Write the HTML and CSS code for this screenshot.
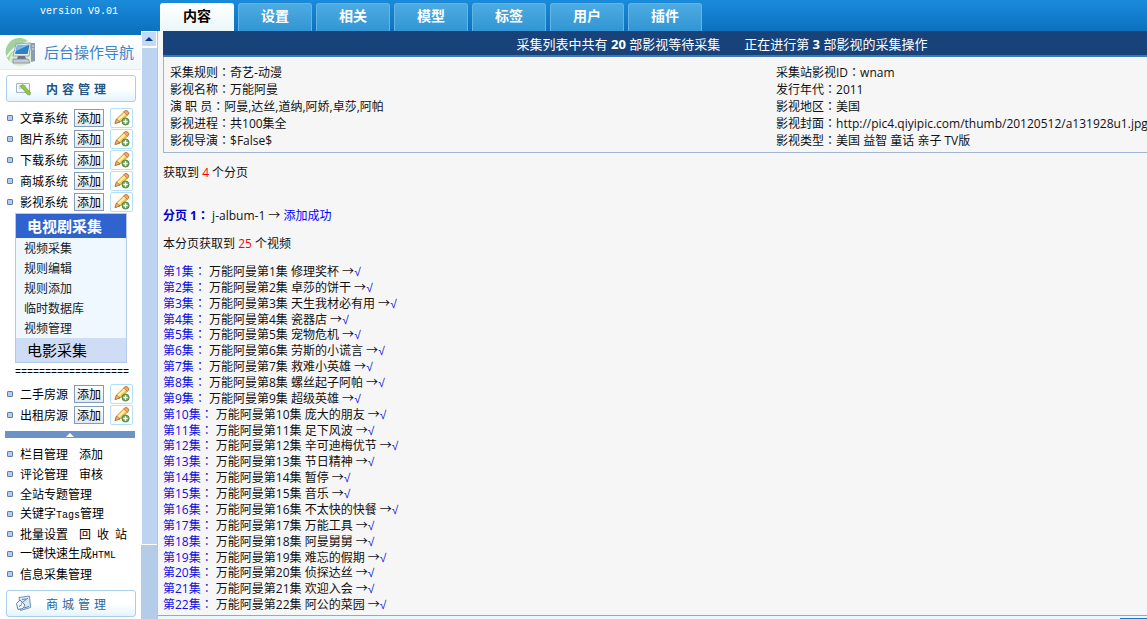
FILE: index.html
```html
<!DOCTYPE html>
<html lang="zh-CN">
<head>
<meta charset="utf-8">
<title>后台操作导航</title>
<link rel="stylesheet" href="styles.css">
</head>
<body>
<svg class="defs" aria-hidden="true">
  <symbol id="pencil" viewBox="0 0 18 18">
    <path d="M2 14.500 3.500 10 11.500 2.200Q13 .8 14.800 2.300T15.200 5.500L7 13Z" fill="#f8c948" stroke="#c88a2e" stroke-width=".8"/>
    <path d="M5 11 13 3.500" stroke="#ffefae" stroke-width="2"/>
    <path d="M11.500 2.200Q13 .8 14.800 2.300T15.200 5.500L14.300 6.300 10.700 3Z" fill="#f0a673" stroke="#b5602a" stroke-width=".6"/>
    <path d="M2 14.500 3.500 10 7 13Z" fill="#e9b58a" stroke="#8a5b20" stroke-width=".6"/>
    <circle cx="12.500" cy="12.500" r="3.600" fill="#6aa552" stroke="#4a7f45" stroke-width=".8"/>
    <path d="M12.500 10.300v4.400M10.300 12.500h4.400" stroke="#fff" stroke-width="1.400"/>
  </symbol>
</svg>
<header class="top">
  <div class="version">version V9.01</div>
  <nav class="tabs">
    <button class="tab active">内容</button><button class="tab">设置</button><button class="tab">相关</button><button class="tab">模型</button><button class="tab">标签</button><button class="tab">用户</button><button class="tab">插件</button>
  </nav>
</header>
<div class="body">
  <aside class="side">
    <div class="brand">
      <svg width="34" height="34" viewBox="0 0 34 34" aria-hidden="true">
        <circle cx="15" cy="17" r="14" fill="#d9edd2"/>
        <path d="M15 3A14 14 0 0 0 4 26Q6 13 24 8Q20 3.500 15 3Z" fill="#9fd39b"/>
        <path d="M2 22Q8 11 24 7" stroke="#f3fbef" stroke-width="2" fill="none"/>
        <path d="M26 8h4v18l-4 1z" fill="#8e9dab"/>
        <path d="M27 11h2M27 14h2" stroke="#dfe7ee"/>
        <path d="M11 9 26 8 24 21 8 21Z" fill="#e6edf3" stroke="#8495a5" stroke-width=".8"/>
        <path d="M12 10.500 24.500 9.700 22.700 19 10 19Z" fill="#2f7fc4"/>
        <path d="M12 10.500 24.500 9.700 11 16Z" fill="#7cbcea"/>
        <path d="M13 21h7l1 3h-9z" fill="#66757f"/>
        <path d="M8 24h15l2 4H8z" fill="#c3ccd4" stroke="#7d8893" stroke-width=".8"/>
      </svg>
      <span>后台操作导航</span>
    </div>
    <button class="group strong">
      <svg width="17" height="16" viewBox="0 0 17 16" aria-hidden="true">
        <path d="M1.500 2.500h13v9h-13z" fill="#f4f8fb" stroke="#a3b5c6"/>
        <path d="M4 5h7M4 7h4" stroke="#9fb0c0"/>
        <path d="m5.500 5 2.500-1.500 7.500 8-.5 2.500-2.500-.5Z" fill="#8fc747" stroke="#6b9d35" stroke-width=".7"/>
      </svg>
      <span>内容管理</span>
    </button>
    <ul class="systems">
      <li><a href="#">文章系统</a><button class="add">添加</button><button class="edit" aria-label="编辑"><svg><use href="#pencil"/></svg></button></li>
      <li><a href="#">图片系统</a><button class="add">添加</button><button class="edit" aria-label="编辑"><svg><use href="#pencil"/></svg></button></li>
      <li><a href="#">下载系统</a><button class="add">添加</button><button class="edit" aria-label="编辑"><svg><use href="#pencil"/></svg></button></li>
      <li><a href="#">商城系统</a><button class="add">添加</button><button class="edit" aria-label="编辑"><svg><use href="#pencil"/></svg></button></li>
      <li><a href="#">影视系统</a><button class="add">添加</button><button class="edit" aria-label="编辑"><svg><use href="#pencil"/></svg></button></li>
    </ul>
    <div class="panel">
      <button class="panel-title open">电视剧采集</button>
      <div class="panel-links">
        <a href="#">视频采集</a><a href="#">规则编辑</a><a href="#">规则添加</a><a href="#">临时数据库</a><a href="#">视频管理</a>
      </div>
      <button class="panel-title">电影采集</button>
    </div>
    <div class="rule">===================</div>
    <ul class="systems">
      <li><a href="#">二手房源</a><button class="add">添加</button><button class="edit" aria-label="编辑"><svg><use href="#pencil"/></svg></button></li>
      <li><a href="#">出租房源</a><button class="add">添加</button><button class="edit" aria-label="编辑"><svg><use href="#pencil"/></svg></button></li>
    </ul>
    <button class="fold" aria-label="收起"><svg width="8" height="4" viewBox="0 0 8 4"><path d="M0 4 4 0l4 4z" fill="#fff"/></svg></button>
    <ul class="links">
      <li><a href="#">栏目管理</a><a href="#">添加</a></li>
      <li><a href="#">评论管理</a><a href="#">审核</a></li>
      <li><a href="#">全站专题管理</a></li>
      <li><a href="#">关键字<span class="mono">Tags</span>管理</a></li>
      <li><a href="#">批量设置</a><a href="#" class="spread"><span>回</span><span>收</span><span>站</span></a></li>
      <li><a href="#">一键快速生成<span class="mono">HTML</span></a></li>
      <li><a href="#">信息采集管理</a></li>
    </ul>
    <button class="group">
      <svg width="17" height="17" viewBox="0 0 17 17" aria-hidden="true">
        <path d="M4 2.500 14.500 1l1 11.500-10 3Z" fill="#dce9f5" stroke="#6f93b8"/>
        <path d="M1.500 8.500 5 5l5 5-2 3.500-5 1Z" fill="#eef5fb" stroke="#5c84ad"/>
        <path d="M6 8.500 13 3M4 11.500l3-2M9 13l5-1.500M7 4.500l4-.5" stroke="#5c84ad" fill="none"/>
      </svg>
      <span>商城管理</span>
    </button>
  </aside>
  <div class="scroll" aria-hidden="true">
    <div class="scroll-up"><svg width="8" height="4" viewBox="0 0 8 4"><path d="M0 4 4 0l4 4z" fill="#0b3a8c"/></svg></div>
    <div class="thumb"></div>
    <div class="track"></div>
  </div>
  <main class="main">
    <div class="status"><span>采集列表中共有 <b>20</b> 部影视等待采集</span><span>正在进行第 <b>3</b> 部影视的采集操作</span></div>
    <div class="info">
      <div>
        <p>采集规则<i lang="zh-TW">：</i>奇艺-动漫</p>
        <p>影视名称<i lang="zh-TW">：</i>万能阿曼</p>
        <p>演 职 员<i lang="zh-TW">：</i>阿曼,达丝,道纳,阿娇,卓莎,阿帕</p>
        <p>影视进程<i lang="zh-TW">：</i>共100集全</p>
        <p>影视导演<i lang="zh-TW">：</i>$False$</p>
      </div>
      <div>
        <p>采集站影视ID<i lang="zh-TW">：</i>wnam</p>
        <p>发行年代<i lang="zh-TW">：</i>2011</p>
        <p>影视地区<i lang="zh-TW">：</i>美国</p>
        <p>影视封面<i lang="zh-TW">：</i>http://pic4.qiyipic.com/thumb/20120512/a131928u1.jpg</p>
        <p>影视类型<i lang="zh-TW">：</i>美国 益智 童话 亲子 TV版</p>
      </div>
    </div>
    <p class="pages">获取到 <em>4</em> 个分页</p>
    <p class="page"><b>分页 1<i lang="zh-TW">：</i></b> j-album-1 <u>→</u> <a href="#">添加成功</a></p>
    <p class="videos">本分页获取到 <em>25</em> 个视频</p>
    <ol class="episodes">
      <li><b>第1集<i lang="zh-TW">：</i></b> 万能阿曼第1集 修理奖杯 <u>→</u><s>√</s></li>
      <li><b>第2集<i lang="zh-TW">：</i></b> 万能阿曼第2集 卓莎的饼干 <u>→</u><s>√</s></li>
      <li><b>第3集<i lang="zh-TW">：</i></b> 万能阿曼第3集 天生我材必有用 <u>→</u><s>√</s></li>
      <li><b>第4集<i lang="zh-TW">：</i></b> 万能阿曼第4集 瓷器店 <u>→</u><s>√</s></li>
      <li><b>第5集<i lang="zh-TW">：</i></b> 万能阿曼第5集 宠物危机 <u>→</u><s>√</s></li>
      <li><b>第6集<i lang="zh-TW">：</i></b> 万能阿曼第6集 劳斯的小谎言 <u>→</u><s>√</s></li>
      <li><b>第7集<i lang="zh-TW">：</i></b> 万能阿曼第7集 救难小英雄 <u>→</u><s>√</s></li>
      <li><b>第8集<i lang="zh-TW">：</i></b> 万能阿曼第8集 螺丝起子阿帕 <u>→</u><s>√</s></li>
      <li><b>第9集<i lang="zh-TW">：</i></b> 万能阿曼第9集 超级英雄 <u>→</u><s>√</s></li>
      <li><b>第10集<i lang="zh-TW">：</i></b> 万能阿曼第10集 庞大的朋友 <u>→</u><s>√</s></li>
      <li><b>第11集<i lang="zh-TW">：</i></b> 万能阿曼第11集 足下风波 <u>→</u><s>√</s></li>
      <li><b>第12集<i lang="zh-TW">：</i></b> 万能阿曼第12集 辛可迪梅优节 <u>→</u><s>√</s></li>
      <li><b>第13集<i lang="zh-TW">：</i></b> 万能阿曼第13集 节日精神 <u>→</u><s>√</s></li>
      <li><b>第14集<i lang="zh-TW">：</i></b> 万能阿曼第14集 暂停 <u>→</u><s>√</s></li>
      <li><b>第15集<i lang="zh-TW">：</i></b> 万能阿曼第15集 音乐 <u>→</u><s>√</s></li>
      <li><b>第16集<i lang="zh-TW">：</i></b> 万能阿曼第16集 不太快的快餐 <u>→</u><s>√</s></li>
      <li><b>第17集<i lang="zh-TW">：</i></b> 万能阿曼第17集 万能工具 <u>→</u><s>√</s></li>
      <li><b>第18集<i lang="zh-TW">：</i></b> 万能阿曼第18集 阿曼舅舅 <u>→</u><s>√</s></li>
      <li><b>第19集<i lang="zh-TW">：</i></b> 万能阿曼第19集 难忘的假期 <u>→</u><s>√</s></li>
      <li><b>第20集<i lang="zh-TW">：</i></b> 万能阿曼第20集 侦探达丝 <u>→</u><s>√</s></li>
      <li><b>第21集<i lang="zh-TW">：</i></b> 万能阿曼第21集 欢迎入会 <u>→</u><s>√</s></li>
      <li><b>第22集<i lang="zh-TW">：</i></b> 万能阿曼第22集 阿公的菜园 <u>→</u><s>√</s></li>
    </ol>
    <footer class="foot"><div class="foot-mark"></div></footer>
  </main>
</div>
</body>
</html>
```

FILE: styles.css
```css
*, *::before { box-sizing: border-box; }
body, p, ul, ol { margin: 0; padding: 0; }
ul, ol { list-style: none; }
body {
  min-height: 100vh;
  display: flex;
  flex-direction: column;
  overflow: hidden;
  font: 12px/16px "Open Sans", "Noto Sans CJK SC", sans-serif;
  color: #111;
}
button { font: inherit; padding: 0; border: 0; background: none; cursor: pointer; }
a { color: inherit; text-decoration: none; }
i, u, s { font-style: normal; text-decoration: none; line-height: 0; }
i { font-family: "Noto Sans CJK TC", sans-serif; }
u { font-family: "Noto Sans CJK SC", sans-serif; }
s { font-family: "Liberation Sans", sans-serif; }
em { font-style: normal; color: #f00; }
.defs { position: absolute; width: 0; height: 0; }

.top {
  height: 31px;
  display: flex;
  align-items: flex-end;
  background: linear-gradient(#1a8bdb, #0c71bf);
}
.version {
  width: 160px;
  flex: none;
  align-self: flex-start;
  padding: 4px 0 0 40px;
  font: 10px/16px "Liberation Mono", monospace;
  color: #fff;
}
.tabs { display: flex; gap: 4px; }
.tab {
  width: 74px;
  height: 28px;
  padding-bottom: 5px;
  border: 1px solid #63b5e6;
  border-bottom: 0;
  border-radius: 3px 3px 0 0;
  background: linear-gradient(#4dabe1, #3196d4);
  color: #fff;
  font-family: "Noto Sans CJK SC", sans-serif;
  font-size: 14px;
  font-weight: bold;
}
.tab.active { background: linear-gradient(#fff, #e9f7f8); border-color: #fff; color: #000; }

.body { flex: 1; display: flex; }
.side {
  width: 141px;
  flex: none;
  border-top: 4px solid #0c71bf;
  background: #fff;
  color: #000;
  font-family: "Noto Sans CJK SC", sans-serif;
}
.brand {
  height: 35px;
  display: flex;
  align-items: center;
  gap: 5px;
  padding-left: 5px;
  margin-bottom: 5px;
  background: linear-gradient(#fff, #f1f7fa);
  border-bottom: 1px solid #e3eef3;
  color: #3d86c6;
  font-size: 15px;
  white-space: nowrap;
}
.group {
  width: 130px;
  height: 27px;
  margin-left: 6px;
  padding-left: 8px;
  display: flex;
  align-items: center;
  gap: 14px;
  border: 1px solid #a9d0e6;
  border-radius: 3px;
  background: linear-gradient(#fff 50%, #e4f4fc);
  color: #2565a0;
  letter-spacing: 4px;
}
.group.strong { font-weight: bold; color: #1f5687; }
.systems { padding: 5px 0 0 7px; }
.systems li { height: 21px; display: flex; align-items: center; }
.systems li::before, .links li::before {
  content: "";
  width: 6px;
  height: 6px;
  flex: none;
  margin-right: 7px;
  border: 1px solid #5f7cab;
  border-radius: 1px;
  background: #b5cdf0;
}
.systems a { width: 54px; }
.add {
  width: 30px;
  height: 18px;
  border: 1px solid #7f9db9;
  background: linear-gradient(#fff, #e4e9f2);
  line-height: 16px;
}
.edit {
  width: 23px;
  height: 20px;
  margin-left: 6px;
  display: grid;
  place-items: center;
  border: 1px solid #b5e0f5;
  border-radius: 2px;
}
.edit svg { width: 18px; height: 18px; fill: none; }
.panel { width: 112px; margin: 1px 0 0 15px; border: 1px solid #b4c9ea; background: #eff7ff; color: #222; }
.panel-title {
  width: 100%;
  height: 24px;
  display: block;
  padding-left: 11px;
  text-align: left;
  font-size: 15px;
  background: #cedcf6;
}
.panel-title.open { background: #3163ce; color: #fff; font-weight: bold; }
.panel-links a { display: block; height: 20px; padding-left: 8px; line-height: 20px; }
.rule { margin-left: 15px; font: 10px/20px "Liberation Mono", monospace; }
.rule + .systems { padding-top: 0; }
.fold {
  width: 130px;
  height: 7px;
  margin: 6px 0 6px 5px;
  display: grid;
  place-items: center;
  background: #6c93c8;
}
.links { padding-left: 7px; margin-bottom: 6px; }
.links li { height: 20px; display: flex; align-items: center; white-space: nowrap; }
.links a + a { margin-left: 11px; }
.spread { display: flex; gap: 6px; }
.mono { font: 10px/16px "Liberation Mono", monospace; }

.scroll { width: 16px; flex: none; display: flex; flex-direction: column; background: #b9d3ee; }
.scroll-up {
  height: 16px;
  display: grid;
  place-items: center;
  border: 1px solid #fff;
  background: #c3daf5;
}
.thumb { flex: 87; border: 1px solid #fff; border-width: 1px 0 1px 1px; background: #bcd4f0; }
.track { flex: 13; background: #b3cde9; }

.main {
  flex: 1;
  min-width: 0;
  display: flex;
  flex-direction: column;
  border-left: 1px solid #a9c9e8;
  background: #f6f6f6;
}
.status {
  height: 26px;
  margin-left: 5px;
  display: flex;
  justify-content: center;
  align-items: center;
  gap: 24px;
  padding: 2px 0 0 134px;
  background: #17427a;
  border-bottom: 2px solid #3f79b3;
  color: #fff;
  font-size: 13px;
}
.info {
  margin-left: 5px;
  padding: 7px 0 3px 6px;
  display: grid;
  grid-template-columns: 606px 1fr;
  border: 1px solid #9fb3cd;
  border-width: 0 0 1px 1px;
  line-height: 17px;
  white-space: nowrap;
}
.pages, .page, .videos { margin-left: 5px; }
.pages { margin-top: 12px; }
.page { margin-top: 27px; }
.page b { color: #0000c8; }
.page a { color: #00f; }
.videos { margin-top: 12px; }
.episodes {
  flex: 1;
  margin: 12px 0 2px 5px;
  display: grid;
  grid-auto-rows: 1fr;
  line-height: 15px;
}
.episodes b, .episodes s { font-weight: normal; color: #1010dc; }
.foot { height: 4px; border-top: 1px solid #86b0c8; background: #ecf8ff; }
.foot-mark { height: 1px; width: 27px; margin: 2px 0 0 auto; background: #1a78c2; }
```
